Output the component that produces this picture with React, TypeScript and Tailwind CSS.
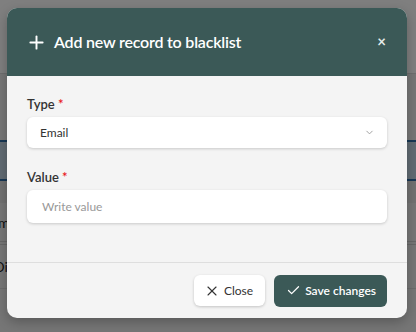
import { ChevronDown, Check, X, Plus } from "lucide-react";

function Backdrop() {
  return (
    <div className="absolute inset-0 bg-[#ececec]">
      <div className="h-[74px] border-b border-[#dcdcdc] bg-white" />
      <div className="h-[66px]" />
      <div className="h-[41px] bg-[#c2d6e6] border-y-2 border-[#2f6fa8]" />
      <div className="h-[22px] bg-[#e2e2e2]" />
      <div className="h-[42px] border-b-4 border-double border-[#cfcfcf] flex items-center text-[14px] text-[#222]">
        <span className="-ml-[10px]">Email</span>
      </div>
      <div className="h-[44px] border-b border-[#d9d9d9] flex items-center text-[14px] text-[#222]">
        <span className="-ml-[6px]">Disc</span>
      </div>
      <div className="absolute inset-0 bg-black/50" />
    </div>
  );
}

export default function App() {
  return (
    <div className="relative w-[416px] h-[332px] overflow-hidden [font-family:Lato,sans-serif]">
      <Backdrop />

      {/* Modal */}
      <div className="absolute left-[7px] top-[8px] w-[400px] rounded-[10px] bg-[#f4f4f4] overflow-hidden shadow-[0_4px_12px_rgba(0,0,0,0.25)]">
        <div className="h-[68px] bg-[#3b5957] flex items-center pl-[19px] pr-[20px]">
          <Plus size={21} strokeWidth={2.2} className="text-white" />
          <h2 className="ml-[7px] text-[16px] font-semibold text-white tracking-[-0.2px]">
            Add new record to blacklist
          </h2>
          <button className="ml-auto text-[#e5ecea] text-[15px] font-bold leading-none mr-[1px] -mt-[2px]">×</button>
        </div>

        <div className="px-[20px] pt-[20px] pb-[39px]">
          <label className="block text-[13px] font-semibold text-[#333] leading-[16px]">
            Type <span className="text-[#e8141b]">*</span>
          </label>
          <div className="mt-[5px] h-[31px] bg-white rounded-[6px] shadow-[0_1px_3px_rgba(0,0,0,0.18)] flex items-center pl-[13px] pr-[12px] text-[12px] text-[#333]">
            Email
            <ChevronDown size={11} className="ml-auto text-[#999]" />
          </div>

          <label className="block mt-[21px] text-[13px] font-semibold text-[#333] leading-[16px]">
            Value <span className="text-[#e8141b]">*</span>
          </label>
          <div className="mt-[5px] h-[33px] bg-white rounded-[6px] shadow-[0_1px_3px_rgba(0,0,0,0.18)] flex items-center pl-[15px] text-[12px] text-[#999]">
            Write value
          </div>
        </div>

        <div className="border-t border-[#dedede] h-[56px] flex items-center justify-end gap-[9px] pr-[20px]">
          <button className="h-[31px] pl-[10px] pr-[12px] bg-white rounded-[6px] shadow-[0_1px_3px_rgba(0,0,0,0.2)] flex items-center gap-[4px] text-[12px] text-[#333]">
            <X size={16} strokeWidth={1.6} />
            Close
          </button>
          <button className="h-[32px] pl-[12px] pr-[11px] bg-[#3b5957] rounded-[6px] flex items-center gap-[4px] text-[12px] font-semibold text-white">
            <Check size={15} strokeWidth={2} />
            Save changes
          </button>
        </div>
      </div>
    </div>
  );
}
